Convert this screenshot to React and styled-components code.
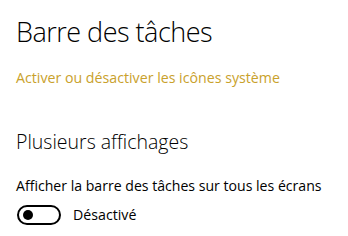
import styled, { createGlobalStyle } from 'styled-components';

const Global = createGlobalStyle`
  html, body {
    margin: 0;
    padding: 0;
    background: #ffffff;
  }
  body {
    font-family: "Open Sans", "Noto Sans", sans-serif;
    color: #000;
  }
`;

const Page = styled.div`
  width: 348px;
  height: 236px;
  padding: 14px 16px 0;
  box-sizing: border-box;
  overflow: hidden;
`;

const Title = styled.h1`
  margin: 0;
  font-size: 27px;
  font-weight: 300;
  line-height: 36px;
  letter-spacing: -0.5px;
`;

const Link = styled.a`
  display: block;
  margin-top: 18px;
  font-size: 14.2px;
  line-height: 20px;
  color: #c9a12b;
  text-decoration: none;
`;

const SectionTitle = styled.h2`
  margin: 41px 0 0;
  font-size: 19.5px;
  font-weight: 300;
  line-height: 26px;
`;

const Label = styled.div`
  margin-top: 21px;
  font-size: 14.1px;
  line-height: 20px;
`;

const ToggleRow = styled.div`
  display: flex;
  align-items: center;
  gap: 12px;
  margin-top: 9px;
  margin-left: 1px;
`;

const Switch = styled.div`
  width: 44px;
  height: 20px;
  box-sizing: border-box;
  border: 2px solid #000;
  border-radius: 10px;
  display: flex;
  align-items: center;
  padding-left: 4px;
`;

const Knob = styled.span`
  width: 10px;
  height: 10px;
  border-radius: 50%;
  background: #000;
`;

const State = styled.span`
  font-size: 14.2px;
  line-height: 20px;
`;

export default function App() {
  return (
    <>
      <Global />
      <Page>
        <Title>Barre des tâches</Title>
        <Link href="#">Activer ou désactiver les icônes système</Link>
        <SectionTitle>Plusieurs affichages</SectionTitle>
        <Label>Afficher la barre des tâches sur tous les écrans</Label>
        <ToggleRow>
          <Switch>
            <Knob />
          </Switch>
          <State>Désactivé</State>
        </ToggleRow>
      </Page>
    </>
  );
}
